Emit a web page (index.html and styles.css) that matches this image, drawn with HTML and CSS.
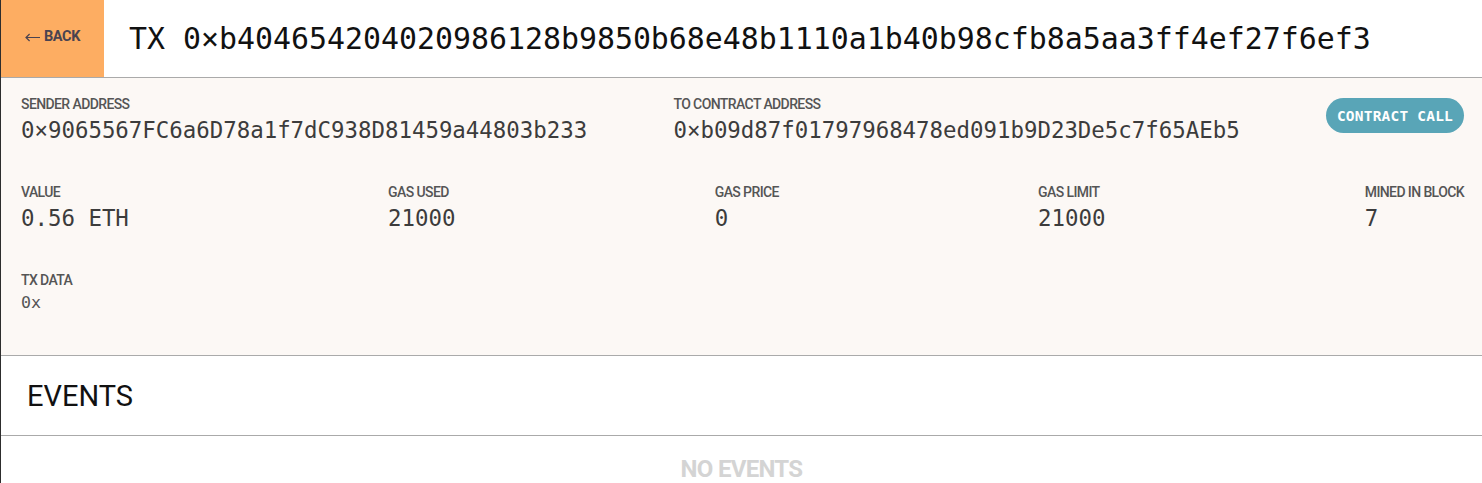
FILE: index.html
```html
<!DOCTYPE html>
<html lang="en">
<head>
<meta charset="utf-8">
<title>TX 0xb40465420402098612...</title>
<link rel="stylesheet" href="styles.css">
</head>
<body>
<div class="page">
  <header class="tx-header">
    <button class="back-btn" type="button"><svg class="arrow" width="15" height="9" viewBox="0 0 15 9" aria-hidden="true"><path d="M15 4.5H1.2M4.6 1L1 4.5L4.6 8" fill="none" stroke="currentColor" stroke-width="1.2"/></svg>BACK</button>
    <h1 class="tx-title">TX 0×b404654204020986128b9850b68e48b1110a1b40b98cfb8a5aa3ff4ef27f6ef3</h1>
  </header>

  <section class="details">
    <div class="row">
      <div class="field">
        <div class="label">SENDER ADDRESS</div>
        <div class="value">0×9065567FC6a6D78a1f7dC938D81459a44803b233</div>
      </div>
      <div class="field">
        <div class="label">TO CONTRACT ADDRESS</div>
        <div class="value">0×b09d87f01797968478ed091b9D23De5c7f65AEb5</div>
      </div>
      <span class="badge">CONTRACT CALL</span>
    </div>

    <div class="row">
      <div class="field">
        <div class="label">VALUE</div>
        <div class="value">0.56 ETH</div>
      </div>
      <div class="field">
        <div class="label">GAS USED</div>
        <div class="value">21000</div>
      </div>
      <div class="field">
        <div class="label">GAS PRICE</div>
        <div class="value">0</div>
      </div>
      <div class="field">
        <div class="label">GAS LIMIT</div>
        <div class="value">21000</div>
      </div>
      <div class="field">
        <div class="label">MINED IN BLOCK</div>
        <div class="value">7</div>
      </div>
    </div>

    <div class="row">
      <div class="field">
        <div class="label">TX DATA</div>
        <div class="value small">0x</div>
      </div>
    </div>
  </section>

  <section class="events-head">
    <h2 class="events-title">EVENTS</h2>
  </section>

  <section class="events-body">
    <div class="no-events">NO EVENTS</div>
  </section>
</div>
</body>
</html>
```

FILE: styles.css
```css
html, body {
  margin: 0;
  padding: 0;
  background: #ffffff;
}

.page {
  border-left: 1px solid #2d2d2d;
  min-height: 100vh;
  box-sizing: border-box;
}

.tx-header {
  display: flex;
  align-items: stretch;
  height: 77px;
  border-bottom: 1px solid #aaaaaa;
}

.back-btn {
  width: 103px;
  border: 0;
  margin: 0;
  padding: 0 0 4px 0;
  background: #fdad62;
  color: #4a4350;
  font-family: Roboto, sans-serif;
  font-weight: 700;
  font-size: 14.5px;
  letter-spacing: -0.4px;
  display: flex;
  align-items: center;
  justify-content: center;
}

.arrow {
  display: block;
  margin-right: 4px;
  margin-top: 1px;
}

.tx-title {
  margin: 0 0 0 25px;
  align-self: center;
  font-family: "DejaVu Sans Mono", "Liberation Mono", monospace;
  font-weight: 400;
  font-size: 29.9px;
  line-height: 36px;
  color: #111111;
  white-space: nowrap;
}

.details {
  background: #fcf8f5;
  height: 278px;
  box-sizing: border-box;
  padding: 18px 18px 0 20px;
  border-bottom: 1px solid #aaaaaa;
}

.row {
  display: flex;
  justify-content: space-between;
  align-items: flex-start;
  margin-bottom: 40px;
}

.field {
  display: flex;
  flex-direction: column;
}

.label {
  font-family: Roboto, sans-serif;
  font-weight: 500;
  font-size: 14px;
  letter-spacing: -0.6px;
  line-height: 17px;
  color: #555555;
  margin-bottom: 3px;
}

.value {
  font-family: "DejaVu Sans Mono", "Liberation Mono", monospace;
  font-size: 22.4px;
  line-height: 28px;
  color: #3c3c3c;
}

.value.small {
  font-size: 16.6px;
  line-height: 22px;
  color: #555555;
}

.badge {
  margin-top: 2px;
  height: 35px;
  padding: 0 11px;
  border-radius: 18px;
  background: #59a5b7;
  color: #ffffff;
  font-family: "DejaVu Sans Mono", "Liberation Mono", monospace;
  font-weight: 700;
  font-size: 14.5px;
  letter-spacing: 0.2px;
  display: flex;
  align-items: center;
}

.events-head {
  height: 80px;
  box-sizing: border-box;
  border-bottom: 1px solid #aaaaaa;
  display: flex;
  align-items: center;
  padding-left: 26px;
}

.events-title {
  margin: 0;
  font-family: Roboto, sans-serif;
  font-weight: 400;
  font-size: 29px;
  color: #111111;
}

.events-body {
  padding-top: 21px;
  display: flex;
  justify-content: center;
}

.no-events {
  font-family: Roboto, sans-serif;
  font-weight: 700;
  font-size: 24px;
  line-height: 24px;
  letter-spacing: -0.7px;
  color: #d4d4d4;
}
```
